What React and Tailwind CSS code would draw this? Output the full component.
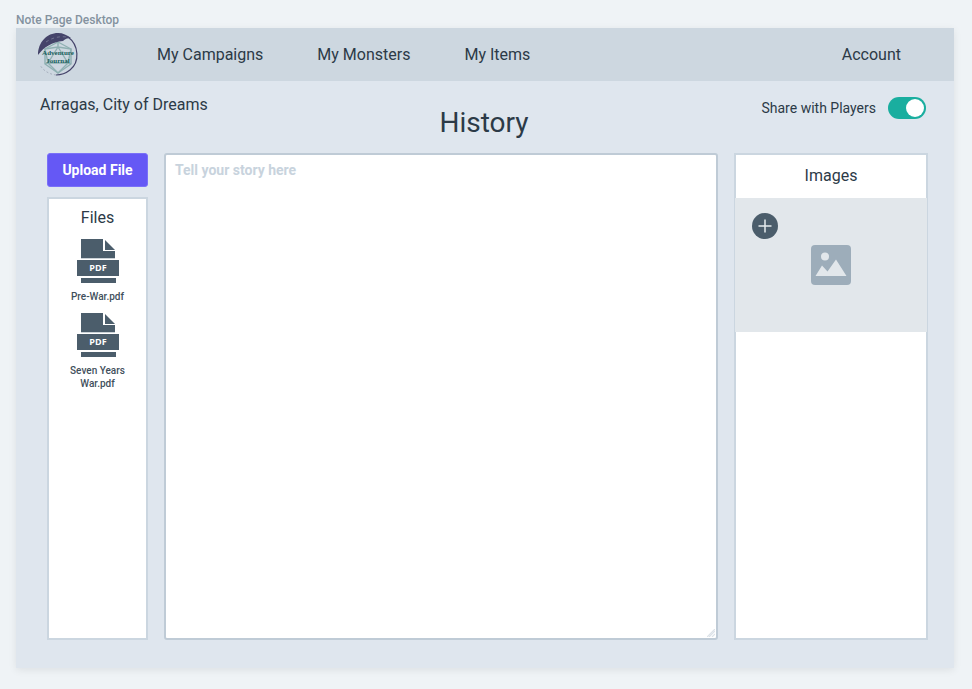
const files = ["Pre-War.pdf", "Seven Years War.pdf"];

function Logo() {
  return (
    <svg viewBox="0 0 42 44" className="h-11 w-[42px]" role="img" aria-label="Adventure Journal">
      <g fill="none" stroke="#8fb0b2" strokeWidth="1.4" strokeLinejoin="round">
        <path d="M21 9 L34 16 V31 L21 40 L8 31 V16 Z" />
        <path d="M21 14 L31 30 H11 Z M21 9 V14 L8 16 L11 30 L8 31 M21 14 L34 16 L31 30 L34 31 M11 30 L21 40 L31 30" />
      </g>
      <path d="M1 22 C1 9 10 0 21 0 C26 0 30 2 34 5 C30 5 28 6 26 8 C15 9 7 14 1 22 Z" fill="#45446a" />
      <path d="M9 9 C15 5 21 3 30 4" fill="none" stroke="#8d93a8" strokeWidth="0.6" strokeDasharray="3 3" />
      <path d="M31 4 C42 12 43 29 33 37 C28 41 24 42 19 42" fill="none" stroke="#45446a" strokeWidth="1.2" />
      <path d="M19 42 C11 41 6 37 3 32" fill="none" stroke="#9aa3b3" strokeWidth="0.8" strokeDasharray="2 2" />
      <g fill="#17605c" fontFamily="'Liberation Serif', serif" fontWeight="700" fontSize="7" textAnchor="middle">
        <text x="21" y="22">Adventure</text>
        <text x="21" y="30">Journal</text>
      </g>
    </svg>
  );
}

function PdfIcon() {
  return (
    <svg viewBox="0 0 44 46" className="h-[46px] w-11" aria-hidden="true">
      <g fill="#4b5d6b">
        <path d="M5 1 H27 V13 H39 V20 H5 Z" />
        <path d="M29 2 L39 12 H29 Z" />
        <rect x="1" y="22" width="42" height="16" />
        <rect x="5" y="40" width="35" height="5" />
      </g>
      <path d="M5 20.500 H39" stroke="#cbd2d7" />
      <text x="22" y="33" textAnchor="middle" fill="#fff" fontFamily="'Open Sans', sans-serif" fontSize="9" fontWeight="700">
        PDF
      </text>
    </svg>
  );
}

function ImageIcon() {
  return (
    <svg viewBox="0 0 40 40" className="size-10" aria-hidden="true">
      <rect width="40" height="40" rx="4" fill="#9dadba" />
      <circle cx="14" cy="11.500" r="4" fill="#e2e7eb" />
      <path d="M4.500 31 L11 20.500 L16.500 26.500 L25 14.500 L35.500 31 Z" fill="#e2e7eb" />
    </svg>
  );
}

function Header() {
  return (
    <header className="flex h-[53px] items-center bg-[#cdd7e0] pr-[53px] pl-[21px] text-base leading-6">
      <a href="#home">
        <Logo />
      </a>
      <nav className="ml-[78px] flex gap-[54px]">
        <a href="#campaigns">My Campaigns</a>
        <a href="#monsters">My Monsters</a>
        <a href="#items">My Items</a>
      </nav>
      <a href="#account" className="ml-auto">Account</a>
    </header>
  );
}

export default function App() {
  return (
    <div className="flex min-h-screen flex-col bg-[#eff3f6] px-4 pt-3 pb-[21px] pr-[18px] font-[Roboto,sans-serif] text-[#2c3a47]">
      <p className="text-xs leading-4 font-medium text-[#84929f]">Note Page Desktop</p>
      <div className="flex flex-1 flex-col bg-[#dfe6ee] shadow-[0_2px_8px_rgba(0,0,0,0.08)]">
        <Header />
        <main className="flex flex-1 flex-col pr-[26px] pb-7">
          <div className="grid h-[72px] grid-cols-[1fr_auto_1fr] pl-6">
            <p className="pt-3 text-base leading-6">Arragas, City of Dreams</p>
            <h1 className="pt-6 text-[28px] leading-9">History</h1>
            <label className="mt-4 mr-0.5 flex h-[22px] items-center justify-end gap-3 self-start text-sm">
              Share with Players
              <input
                type="checkbox"
                defaultChecked
                className="flex h-[22px] w-[38px] appearance-none items-center rounded-full bg-[#9dadba] px-0.5 before:size-[18px] before:rounded-full before:bg-white checked:justify-end checked:bg-[#1aae9f]"
              />
            </label>
          </div>
          <div className="flex flex-1 gap-4 pl-[31px]">
            <aside className="flex w-[101px] flex-col gap-2.5">
              <button type="button" className="h-[34px] rounded-[3px] border border-[#7a70f8] bg-[#6558f5] text-sm font-bold text-white">
                Upload File
              </button>
              <section className="flex-1 border-2 border-[#cbd6e0] bg-white pt-[7px] text-center">
                <h2 className="text-base leading-6">Files</h2>
                <ul className="mt-2 flex flex-col gap-[9px]">
                  {files.map((name) => (
                    <li key={name}>
                      <a href="#file" className="flex flex-col items-center gap-1.5 px-4 text-[10px] leading-[13px] font-medium text-[#3f4f5c]">
                        <PdfIcon />
                        <span>{name}</span>
                      </a>
                    </li>
                  ))}
                </ul>
              </section>
            </aside>
            <div className="relative flex flex-1">
              <textarea
                aria-label="Story"
                placeholder="Tell your story here"
                className="w-full resize-none rounded-[3px] border-2 border-[#bfcbd6] bg-white px-[9px] py-[5px] text-sm leading-5 outline-none placeholder:font-bold placeholder:text-[#c8d3dd]"
              />
              <svg viewBox="0 0 8 8" className="absolute right-[3px] bottom-[3px] size-2" aria-hidden="true">
                <path d="M0 8 L8 0 M2 8 L8 2 M5 8 L8 5" stroke="#dce2e8" strokeWidth="1.200" />
              </svg>
            </div>
            <section className="w-[194px] border-2 border-[#cbd6e0] bg-white text-center">
              <h2 className="h-[43px] pt-[9px] text-base leading-6">Images</h2>
              <div className="relative -mx-px flex h-[134px] items-center justify-center bg-[#e2e7eb]">
                <ImageIcon />
                <button type="button" aria-label="Add image" className="absolute top-[15px] left-[17px] flex size-[26px] items-center justify-center rounded-full bg-[#4b5d6b]">
                  <svg viewBox="0 0 14 14" className="size-3.5" aria-hidden="true">
                    <path d="M7 0.500 V13.500 M0.500 7 H13.500" stroke="#e6ebee" strokeWidth="1.500" />
                  </svg>
                </button>
              </div>
            </section>
          </div>
        </main>
      </div>
    </div>
  );
}
